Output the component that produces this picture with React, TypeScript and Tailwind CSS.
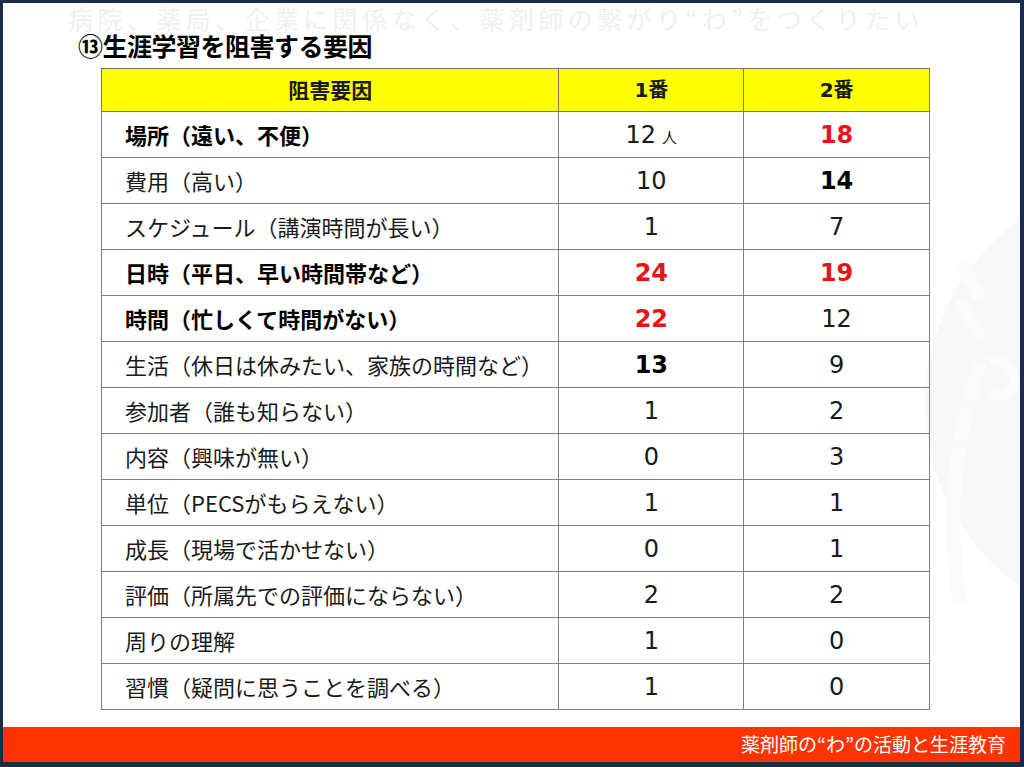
import type { ReactNode } from "react";

type Row = {
  label: string;
  bold?: boolean;
  first: ReactNode;
  second: ReactNode;
};

const jp = "font-['Noto_Sans_CJK_JP',sans-serif]";
const num = "font-['DejaVu_Sans','Noto_Sans_CJK_JP',sans-serif]";

function Red({ children }: { children: ReactNode }) {
  return <span className="font-bold text-[#e81416]">{children}</span>;
}

function Strong({ children }: { children: ReactNode }) {
  return <span className="font-bold text-black">{children}</span>;
}

const rows: Row[] = [
  {
    label: "場所（遠い、不便）",
    bold: true,
    first: (
      <span>
        12<span className={`ml-[6px] text-[15px] ${jp}`}>人</span>
      </span>
    ),
    second: <Red>18</Red>,
  },
  { label: "費用（高い）", first: "10", second: <Strong>14</Strong> },
  { label: "スケジュール（講演時間が長い）", first: "1", second: "7" },
  { label: "日時（平日、早い時間帯など）", bold: true, first: <Red>24</Red>, second: <Red>19</Red> },
  { label: "時間（忙しくて時間がない）", bold: true, first: <Red>22</Red>, second: "12" },
  { label: "生活（休日は休みたい、家族の時間など）", first: <Strong>13</Strong>, second: "9" },
  { label: "参加者（誰も知らない）", first: "1", second: "2" },
  { label: "内容（興味が無い）", first: "0", second: "3" },
  { label: "単位（PECSがもらえない）", first: "1", second: "1" },
  { label: "成長（現場で活かせない）", first: "0", second: "1" },
  { label: "評価（所属先での評価にならない）", first: "2", second: "2" },
  { label: "周りの理解", first: "1", second: "0" },
  { label: "習慣（疑問に思うことを調べる）", first: "1", second: "0" },
];

// faint logo behind the right edge of the slide
function Watermark() {
  return (
    <svg
      className="pointer-events-none absolute right-0 top-[180px]"
      width="100"
      height="440"
      viewBox="0 0 100 440"
    >
      <circle cx="230" cy="220" r="225" fill="#f8f8f8" />
      <path d="M40 420 Q 20 300 60 180" stroke="#fbfbfb" strokeWidth="14" fill="none" />
      <rect x="30" y="90" width="40" height="14" rx="3" fill="#fcfcfc" transform="rotate(60 50 97)" />
      <rect x="28" y="130" width="46" height="12" rx="3" fill="#fcfcfc" transform="rotate(60 50 136)" />
      <path d="M70 180 q 20 -10 25 20 q -10 20 -25 10" stroke="#fcfcfc" strokeWidth="10" fill="none" />
    </svg>
  );
}

export default function App() {
  return (
    <div className="h-[767px] w-[1024px] bg-[#1c2b4a] pb-[5px] pl-[3px] pr-[4px] pt-[3px]">
      <div className={`relative flex h-full flex-col overflow-hidden bg-white ${jp}`}>
        <Watermark />
        <div className="relative h-[30px] whitespace-nowrap pl-[65px] text-[25px] leading-[30px] tracking-[4.4px] text-[#f0f0f0]">
          病院、薬局、企業に関係なく、薬剤師の繋がり“わ”をつくりたい
        </div>
        <h1 className="relative h-[24px] pl-[75px] text-[25px] font-bold leading-[24px] tracking-[-0.5px] text-black">
          ⑬生涯学習を阻害する要因
        </h1>
        <table className="relative ml-[98px] mt-[11px] w-[829px] border-collapse text-[#1a1a1a]">
          <colgroup>
            <col className="w-[458px]" />
            <col className="w-[185px]" />
            <col className="w-[186px]" />
          </colgroup>
          <thead>
            <tr className="h-[43px] bg-[#ffff00] font-bold">
              <th className="border border-[#7a7a5a] text-center text-[21px]">阻害要因</th>
              <th className={`border border-[#7a7a5a] text-center text-[20px] ${num}`}>1番</th>
              <th className={`border border-[#7a7a5a] text-center text-[20px] ${num}`}>2番</th>
            </tr>
          </thead>
          <tbody>
            {rows.map((r) => (
              <tr key={r.label} className="h-[46px]">
                <td
                  className={`border border-[#7f7f7f] pl-[23px] text-[22px] ${
                    r.bold ? "font-bold text-black" : ""
                  }`}
                >
                  {r.label}
                </td>
                <td className={`border border-[#7f7f7f] text-center text-[24px] ${num}`}>
                  {r.first}
                </td>
                <td className={`border border-[#7f7f7f] text-center text-[24px] ${num}`}>
                  {r.second}
                </td>
              </tr>
            ))}
          </tbody>
        </table>
        <div className="relative mt-auto flex h-[35px] items-center justify-end bg-[#ff3300] pr-[14px] text-[19px] text-white">
          薬剤師の“わ”の活動と生涯教育
        </div>
      </div>
    </div>
  );
}
